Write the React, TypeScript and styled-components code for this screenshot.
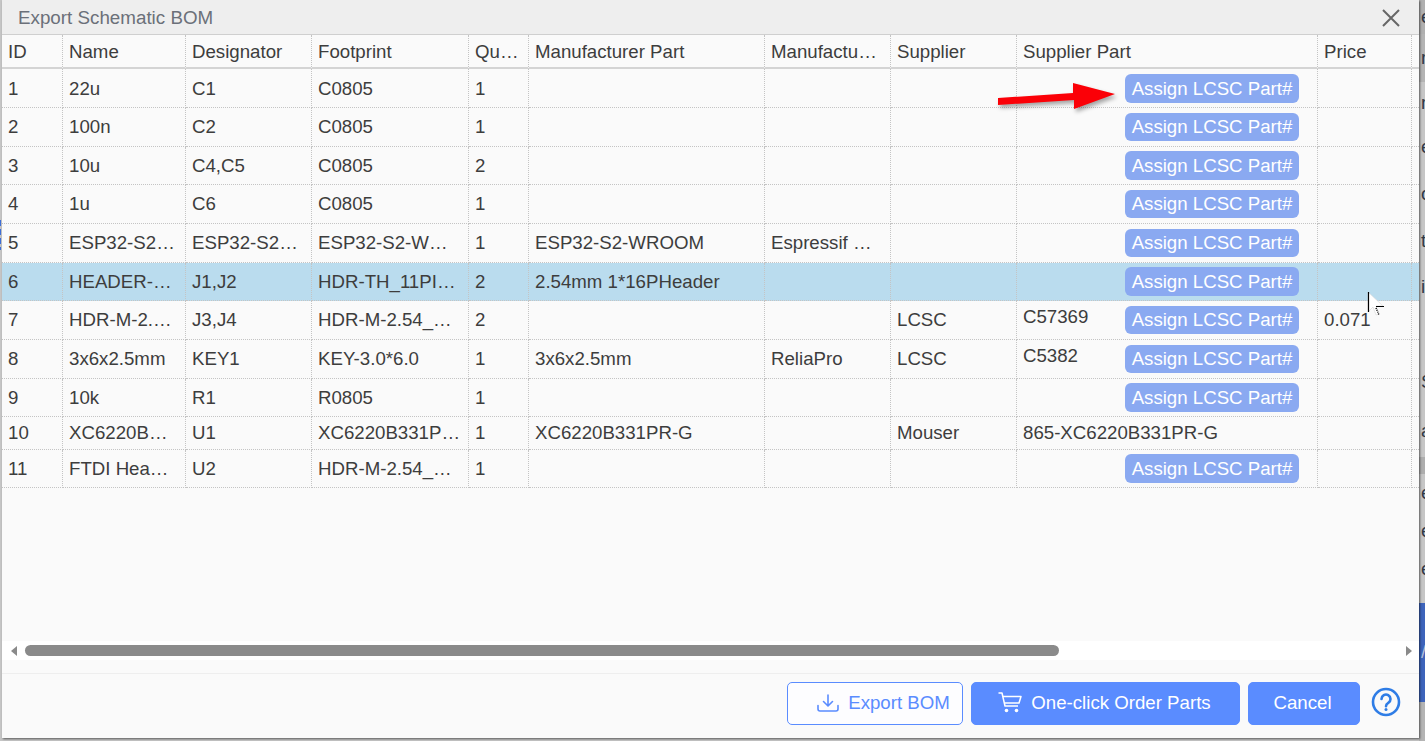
import styled, { createGlobalStyle } from 'styled-components';

const GlobalStyle = createGlobalStyle`
  html, body {
    margin: 0;
    padding: 0;
    background: #c6c6c6;
    overflow: hidden;
  }
  * {
    box-sizing: border-box;
  }
`;

const Page = styled.div`
  width: 1425px;
  height: 741px;
  display: grid;
  grid-template-columns: 2px 1417px 6px;
  font-family: 'Liberation Sans', Arial, sans-serif;
  font-size: 18.67px;
  color: #3d3d3d;
  overflow: hidden;
`;

const LeftStrip = styled.div`
  display: flex;
  flex-direction: column;
  padding-top: 220px;
`;

const LeftMark = styled.div`
  width: 1px;
  height: 30px;
  background: repeating-linear-gradient(#3f6fd8 0 6px, #c6c6c6 6px 9px);
`;

const Dialog = styled.section`
  position: relative;
  height: 738px;
  display: flex;
  flex-direction: column;
  background: #fafafa;
  box-shadow: 1px 1px 2px rgba(0, 0, 0, 0.55);
  z-index: 1;
`;

const TitleBar = styled.header`
  flex: none;
  height: 35px;
  display: flex;
  align-items: center;
  justify-content: space-between;
  padding: 1px 19px 0 16px;
  background: #eeeeee;
  border-bottom: 1px solid #cfcfcf;
`;

const Title = styled.h1`
  margin: 0;
  font-size: 18.8px;
  font-weight: 400;
  color: #6b7079;
`;

const CloseButton = styled.button`
  width: 18px;
  height: 18px;
  padding: 0;
  border: 0;
  background: none;
  color: #666666;
  display: flex;
`;

const TableArea = styled.div`
  flex: none;
  height: 606px;
  overflow: hidden;
`;

const Table = styled.table`
  width: 1417px;
  table-layout: fixed;
  border-collapse: separate;
  border-spacing: 0;
`;

const HeadCell = styled.th`
  height: 34px;
  padding: 1px 9.2px 0 6px;
  text-align: left;
  font-weight: 400;
  white-space: nowrap;
  overflow: hidden;
  text-overflow: ellipsis;
  border-right: 1px dotted #c4c4c4;
  border-bottom: 2px solid #d4d4d4;
  &:last-child {
    border-right: 0;
    padding: 0;
  }
`;

const Row = styled.tr<{ $selected?: boolean }>`
  background: ${(p) => (p.$selected ? '#badcee' : 'transparent')};
`;

const Cell = styled.td<{ $height: number }>`
  height: ${(p) => p.$height}px;
  padding: 0 7.5px 0 6px;
  white-space: nowrap;
  overflow: hidden;
  text-overflow: ellipsis;
  border-right: 1px dotted #c4c4c4;
  border-bottom: 1px dotted #c4c4c4;
  tr:first-child > & {
    padding-top: 1px;
  }
  &:last-child {
    border-right: 0;
    padding: 0;
  }
`;

const PartCell = styled.div`
  display: flex;
  align-items: center;
  justify-content: space-between;
  padding-right: 10.5px;
`;

const PartCode = styled.span<{ $raised: boolean }>`
  margin-bottom: ${(p) => (p.$raised ? '7px' : '0')};
`;

const AssignButton = styled.button`
  flex: none;
  margin-left: auto;
  width: 174px;
  height: 28.5px;
  padding: 0;
  border: 0;
  border-radius: 6px;
  background: #8aa9f1;
  color: #ffffff;
  font: inherit;
  white-space: nowrap;
`;

const ScrollBar = styled.div`
  flex: none;
  height: 19px;
  display: flex;
  align-items: center;
  padding: 0 7px 0 9px;
  background: #ffffff;
`;

const ScrollArrow = styled.span<{ $right?: boolean }>`
  width: 0;
  height: 0;
  border-top: 5px solid transparent;
  border-bottom: 5px solid transparent;
  ${(p) =>
    p.$right
      ? 'border-left: 6px solid #8a8a8a; margin-left: auto;'
      : 'border-right: 6px solid #8a8a8a;'}
`;

const ScrollThumb = styled.div`
  width: 1034px;
  height: 11px;
  margin-left: 8px;
  border-radius: 6px;
  background: #8a8a8a;
`;

const Spacer = styled.div`
  flex: none;
  height: 13px;
`;

const Footer = styled.footer`
  flex: 1;
  display: flex;
  align-items: flex-start;
  justify-content: flex-end;
  gap: 8px;
  padding: 8px 18px 0 0;
  border-top: 1px solid #eeeeee;
`;

const FooterButton = styled.button<{ $width: number; $outline?: boolean; $left?: number; $right?: number }>`
  width: ${(p) => p.$width}px;
  height: 43px;
  display: flex;
  align-items: center;
  justify-content: center;
  gap: 9px;
  padding: 0 ${(p) => p.$right ?? 0}px 2px ${(p) => p.$left ?? 0}px;
  border: 1px solid #5a8cff;
  border-radius: 5px;
  background: ${(p) => (p.$outline ? '#fdfdff' : '#5a8cff')};
  color: ${(p) => (p.$outline ? '#5a8cff' : '#ffffff')};
  font: inherit;
`;

const HelpIcon = styled.svg`
  width: 30px;
  height: 30px;
  margin: 5px 0 0 3px;
  color: #2f7de6;
`;

const RightStrip = styled.aside`
  display: flex;
  flex-direction: column;
  overflow: hidden;
  padding-left: 1px;
  background: #c6c6c6;
`;

const StripLine = styled.div<{ $height: number; $bg: string; $color?: string }>`
  flex: none;
  height: ${(p) => p.$height}px;
  margin-left: -1px;
  padding-left: 2px;
  display: flex;
  align-items: center;
  background: ${(p) => p.$bg};
  color: ${(p) => p.$color ?? '#2f3a48'};
  line-height: 1;
`;

const Arrow = styled.svg`
  position: absolute;
  left: 994px;
  top: 80px;
  width: 126px;
  height: 36px;
  filter: drop-shadow(2px 3px 2px rgba(0, 0, 0, 0.35));
`;

const Pointer = styled.svg`
  position: absolute;
  left: 1364px;
  top: 290px;
  width: 22px;
  height: 28px;
`;

const COLUMNS = [61, 123, 126, 157, 60, 236, 126, 126, 301, 94, 7];

const HEADERS = [
  'ID',
  'Name',
  'Designator',
  'Footprint',
  'Quantity',
  'Manufacturer Part',
  'Manufacturer',
  'Supplier',
  'Supplier Part',
  'Price',
  '',
];

type Part = {
  height: number;
  name: string;
  designator: string;
  footprint: string;
  quantity: number;
  mpn?: string;
  maker?: string;
  supplier?: string;
  code?: string;
  price?: string;
  assign?: boolean;
  selected?: boolean;
};

const PARTS: Part[] = [
  { height: 39, name: '22u', designator: 'C1', footprint: 'C0805', quantity: 1, assign: true },
  { height: 39, name: '100n', designator: 'C2', footprint: 'C0805', quantity: 1, assign: true },
  { height: 38, name: '10u', designator: 'C4,C5', footprint: 'C0805', quantity: 2, assign: true },
  { height: 39, name: '1u', designator: 'C6', footprint: 'C0805', quantity: 1, assign: true },
  {
    height: 39,
    name: 'ESP32-S2-WROOM',
    designator: 'ESP32-S2-WROOM',
    footprint: 'ESP32-S2-WROOM',
    quantity: 1,
    mpn: 'ESP32-S2-WROOM',
    maker: 'Espressif Systems',
    assign: true,
  },
  {
    height: 38,
    name: 'HEADER-1X16',
    designator: 'J1,J2',
    footprint: 'HDR-TH_11PIN-P2.54',
    quantity: 2,
    mpn: '2.54mm 1*16PHeader',
    assign: true,
    selected: true,
  },
  {
    height: 39,
    name: 'HDR-M-2.54_1X6',
    designator: 'J3,J4',
    footprint: 'HDR-M-2.54_1X16',
    quantity: 2,
    supplier: 'LCSC',
    code: 'C57369',
    price: '0.071',
    assign: true,
  },
  {
    height: 39,
    name: '3x6x2.5mm',
    designator: 'KEY1',
    footprint: 'KEY-3.0*6.0',
    quantity: 1,
    mpn: '3x6x2.5mm',
    maker: 'ReliaPro',
    supplier: 'LCSC',
    code: 'C5382',
    assign: true,
  },
  { height: 38, name: '10k', designator: 'R1', footprint: 'R0805', quantity: 1, assign: true },
  {
    height: 33,
    name: 'XC6220B331PR-G',
    designator: 'U1',
    footprint: 'XC6220B331PR-G-SOT',
    quantity: 1,
    mpn: 'XC6220B331PR-G',
    supplier: 'Mouser',
    code: '865-XC6220B331PR-G',
  },
  {
    height: 38,
    name: 'FTDI Header-1X6',
    designator: 'U2',
    footprint: 'HDR-M-2.54_1X6',
    quantity: 1,
    assign: true,
  },
];

const STRIP = [
  { height: 34, bg: '#b0b0b0', text: 'e' },
  { height: 48, bg: '#b4b4b4', text: "r'" },
  { height: 43, bg: '#c6c6c6', text: 'r' },
  { height: 45, bg: '#c6c6c6', text: 'e' },
  { height: 48, bg: '#c6c6c6', text: 'o' },
  { height: 47, bg: '#c6c6c6', text: 't' },
  { height: 45, bg: '#c6c6c6', text: 'i' },
  { height: 50, bg: '#c6c6c6', text: '' },
  { height: 45, bg: '#c6c6c6', text: 'S' },
  { height: 52, bg: '#c6c6c6', text: 'a' },
  { height: 17, bg: '#aeaeae', text: '' },
  { height: 38, bg: '#c6c6c6', text: 'e' },
  { height: 38, bg: '#c6c6c6', text: 'e' },
  { height: 38, bg: '#c6c6c6', text: 'e' },
  { height: 15, bg: '#c6c6c6', text: '' },
  { height: 99, bg: '#3e64bb', text: '/', color: '#b4c0dc' },
  { height: 39, bg: '#b4b4b4', text: '' },
];

export default function App() {
  return (
    <Page>
      <GlobalStyle />
      <LeftStrip>
        <LeftMark />
      </LeftStrip>
      <Dialog>
        <TitleBar>
          <Title>Export Schematic BOM</Title>
          <CloseButton type="button" aria-label="Close">
            <svg width="18" height="18" viewBox="0 0 18 18" fill="none" stroke="currentColor" strokeWidth="2">
              <path d="M1 1l16 16M17 1L1 17" />
            </svg>
          </CloseButton>
        </TitleBar>

        <TableArea>
          <Table>
            <colgroup>
              {COLUMNS.map((width, i) => (
                <col key={i} style={{ width }} />
              ))}
            </colgroup>
            <thead>
              <tr>
                {HEADERS.map((label, i) => (
                  <HeadCell key={i}>{label}</HeadCell>
                ))}
              </tr>
            </thead>
            <tbody>
              {PARTS.map((part, i) => (
                <Row key={i} $selected={part.selected}>
                  <Cell $height={part.height}>{i + 1}</Cell>
                  <Cell $height={part.height}>{part.name}</Cell>
                  <Cell $height={part.height}>{part.designator}</Cell>
                  <Cell $height={part.height}>{part.footprint}</Cell>
                  <Cell $height={part.height}>{part.quantity}</Cell>
                  <Cell $height={part.height}>{part.mpn}</Cell>
                  <Cell $height={part.height}>{part.maker}</Cell>
                  <Cell $height={part.height}>{part.supplier}</Cell>
                  <Cell $height={part.height}>
                    <PartCell>
                      {part.code && <PartCode $raised={!!part.assign}>{part.code}</PartCode>}
                      {part.assign && <AssignButton type="button">Assign LCSC Part#</AssignButton>}
                    </PartCell>
                  </Cell>
                  <Cell $height={part.height}>{part.price}</Cell>
                  <Cell $height={part.height} />
                </Row>
              ))}
            </tbody>
          </Table>
        </TableArea>

        <ScrollBar>
          <ScrollArrow />
          <ScrollThumb />
          <ScrollArrow $right />
        </ScrollBar>
        <Spacer />

        <Footer>
          <FooterButton type="button" $width={176} $outline $left={17}>
            <svg width="22" height="18" viewBox="0 0 22 18" fill="none" stroke="currentColor" strokeWidth="1.6" strokeLinecap="round" strokeLinejoin="round">
              <path d="M11 1v10.5M6.5 7.5l4.5 4.5 4.5-4.5" />
              <path d="M1 11.5v3.5a2 2 0 0 0 2 2h16a2 2 0 0 0 2-2v-3.5" />
            </svg>
            Export BOM
          </FooterButton>
          <FooterButton type="button" $width={269} $right={2}>
            <svg width="24" height="21" viewBox="0 0 24 21" fill="none" stroke="currentColor" strokeWidth="1.5" strokeLinejoin="round">
              <path d="M0.5 1h3.5l3 13h13" />
              <path d="M4.8 4.5H23l-2 6.5H6.5" />
              <circle cx="8.5" cy="18.5" r="1.8" fill="currentColor" stroke="none" />
              <circle cx="18.5" cy="18.5" r="1.8" fill="currentColor" stroke="none" />
            </svg>
            One-click Order Parts
          </FooterButton>
          <FooterButton type="button" $width={112} $right={3}>
            Cancel
          </FooterButton>
          <HelpIcon viewBox="0 0 30 30" fill="none" stroke="currentColor" strokeWidth="2.6">
            <circle cx="15" cy="15" r="13" />
            <path d="M10.5 12a4.5 4.5 0 1 1 6.8 3.9c-1.5.9-2.3 1.6-2.3 3.3" strokeLinecap="round" />
            <circle cx="15" cy="22.5" r="1.5" fill="currentColor" stroke="none" />
          </HelpIcon>
        </Footer>

        <Arrow viewBox="0 0 126 36">
          <polygon points="2,18 77,13 77,3 119,14 78,29 78,20 2,25" fill="#fb0007" />
        </Arrow>

        <Pointer viewBox="0 0 22 28">
          <path d="M2 2l15 14h-7l3 8-3 1-3-8-5 5z" fill="#ffffff" stroke="#d8d8d8" strokeWidth="0.6" />
          <path d="M2.5 2v20M10 16.500h8" stroke="#000000" strokeWidth="1.2" fill="none" />
          <path d="M10 18l3 7" stroke="#000000" strokeWidth="1.4" strokeDasharray="1 1" fill="none" />
        </Pointer>
      </Dialog>
      <RightStrip>
        {STRIP.map((line, i) => (
          <StripLine key={i} $height={line.height} $bg={line.bg} $color={line.color}>
            {line.text}
          </StripLine>
        ))}
      </RightStrip>
    </Page>
  );
}
